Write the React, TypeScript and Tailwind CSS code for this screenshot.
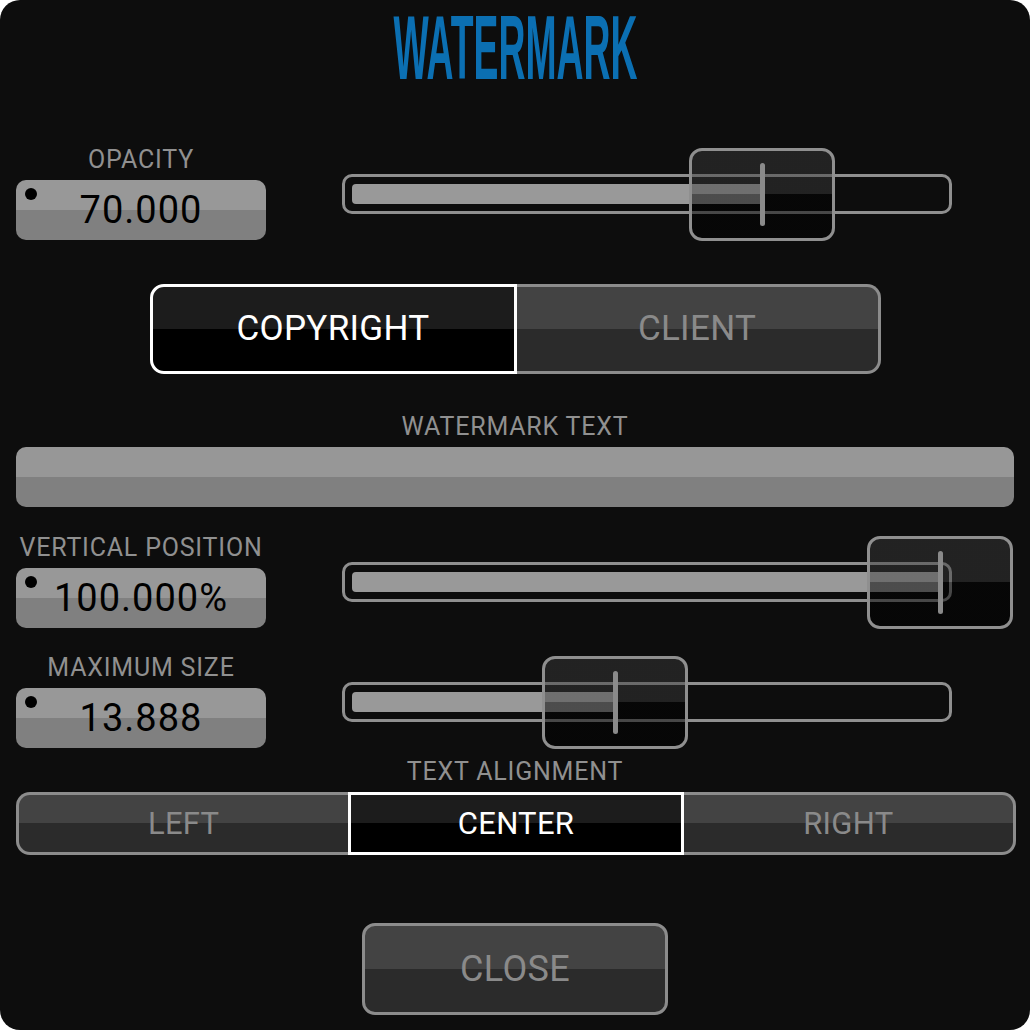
import React from "react";

function Label({ text }: { text: string }) {
  return (
    <div className="h-[25px] whitespace-nowrap text-center text-[25px] leading-[25px] tracking-[0.8px] text-[#909090]">
      {text}
    </div>
  );
}

function ValueBox({ label, value }: { label: string; value: string }) {
  return (
    <div className="flex w-[250px] shrink-0 flex-col items-center">
      <Label text={label} />
      <div className="relative mt-[8px] flex h-[60px] w-[250px] items-center justify-center rounded-[10px] bg-[linear-gradient(#989898_50%,#808080_50%)]">
        <span className="absolute left-[9px] top-[8px] h-[12px] w-[12px] rounded-full bg-black" />
        <span className="text-[38px] leading-[38px] tracking-[1px] text-black">{value}</span>
      </div>
    </div>
  );
}

function Slider({ thumbLeft, fill }: { thumbLeft: number; fill: number }) {
  return (
    <div className="relative ml-[76px] mt-[27px] h-[40px] w-[610px] shrink-0 rounded-[10px] border-[3px] border-[#8f8f8f] p-[7px]">
      <div className="h-full rounded-l-[4px] bg-[#999999]" style={{ width: fill }} />
      <div
        className="absolute top-[-29px] h-[93px] w-[146px] rounded-[13px] border-[3px] border-[#8f8f8f] bg-[linear-gradient(rgba(60,60,60,0.45)_50%,rgba(0,0,0,0.5)_50%)]"
        style={{ left: thumbLeft }}
      >
        <div className="mx-auto mt-[12px] h-[63px] w-[5px] rounded-full bg-[#8a8a8a]" />
      </div>
    </div>
  );
}

const SEL = "bg-[linear-gradient(#1c1c1c_50%,#000000_50%)] border-white text-white";
const UNSEL = "bg-[linear-gradient(#434343_50%,#2b2b2b_50%)] border-[#8c8c8c] text-[#8a8a8a]";

export default function App() {
  return (
    <div className="h-[1030px] w-[1030px] bg-white">
      <div className="flex h-[1030px] w-[1030px] flex-col overflow-hidden rounded-[20px] bg-[#0d0d0d] px-[16px] font-['Roboto',sans-serif]">
        {/* Title */}
        <div className="flex h-[93px] items-start justify-center pt-[2px]">
          <span className="inline-block scale-x-[0.41] whitespace-nowrap font-['Liberation_Sans',sans-serif] text-[91px] font-bold leading-[91px] text-[#0b6fb2]">
            WATERMARK
          </span>
        </div>

        {/* Opacity */}
        <div className="mt-[54px] flex items-start">
          <ValueBox label="OPACITY" value="70.000" />
          <Slider thumbLeft={344} fill={410} />
        </div>

        {/* Copyright / Client */}
        <div className="mx-auto mt-[44px] flex h-[90px] w-[731px] text-[35px] tracking-[0.3px]">
          <div className={`flex flex-1 items-center justify-center rounded-l-[14px] border-[3px] ${SEL}`}>
            COPYRIGHT
          </div>
          <div className={`flex flex-1 items-center justify-center rounded-r-[14px] border-[3px] border-l-0 ${UNSEL}`}>
            CLIENT
          </div>
        </div>

        {/* Watermark text */}
        <div className="mt-[40px]">
          <Label text="WATERMARK TEXT" />
        </div>
        <div className="mx-auto mt-[8px] h-[60px] w-[998px] rounded-[10px] bg-[linear-gradient(#979797_50%,#808080_50%)]" />

        {/* Vertical position */}
        <div className="mt-[28px] flex items-start">
          <ValueBox label="VERTICAL POSITION" value="100.000%" />
          <Slider thumbLeft={522} fill={588} />
        </div>

        {/* Maximum size */}
        <div className="mt-[27px] flex items-start">
          <ValueBox label="MAXIMUM SIZE" value="13.888" />
          <Slider thumbLeft={197} fill={263} />
        </div>

        {/* Text alignment */}
        <div className="mt-[11px]">
          <Label text="TEXT ALIGNMENT" />
        </div>
        <div className="mx-auto mt-[8px] flex h-[63px] w-[1000px] text-[31px] tracking-[0.3px]">
          <div className={`flex flex-1 items-center justify-center rounded-l-[14px] border-[3px] border-r-0 pt-[2px] ${UNSEL}`}>
            LEFT
          </div>
          <div className={`flex flex-1 items-center justify-center border-[3px] pt-[2px] ${SEL}`}>CENTER</div>
          <div className={`flex flex-1 items-center justify-center rounded-r-[14px] border-[3px] border-l-0 pt-[2px] ${UNSEL}`}>
            RIGHT
          </div>
        </div>

        {/* Close */}
        <div
          className={`mx-auto mt-[68px] flex h-[92px] w-[306px] items-center justify-center rounded-[13px] border-[3px] text-[36px] tracking-[0.3px] ${UNSEL}`}
        >
          CLOSE
        </div>
      </div>
    </div>
  );
}
